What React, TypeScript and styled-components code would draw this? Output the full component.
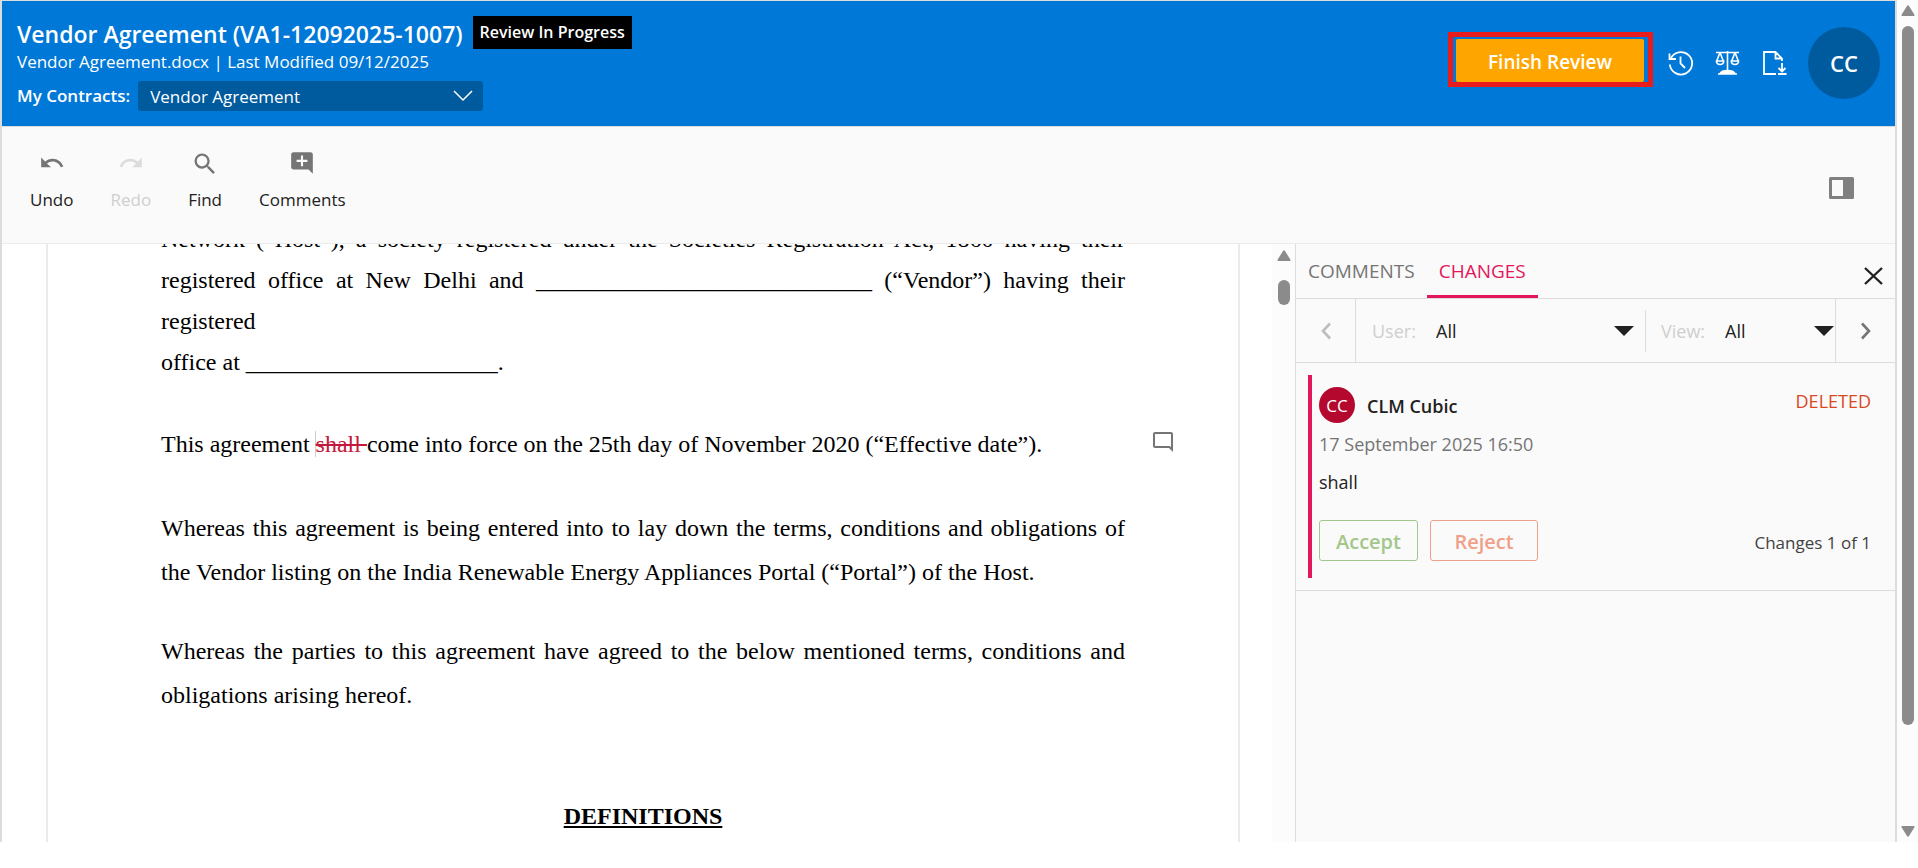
import React from "react";
import styled, { createGlobalStyle } from "styled-components";
import { MdAddComment, MdOutlineModeComment, MdRedo, MdSearch, MdUndo } from "react-icons/md";

const ui = `"Segoe UI", "Open Sans", "Noto Sans", sans-serif`;
const pink = "#e3165b";
const line = "#dcdcdc";

const GlobalStyle = createGlobalStyle`
  * { box-sizing: border-box; }
  body { margin: 0; background: #fff; font-family: ${ui}; color: #212121; }
  button, select { font-family: inherit; }
  h1, h2, p { margin: 0; }
`;

const Window = styled.div`
  display: flex;
  height: calc(100vh - 26px);
`;

const Shell = styled.div`
  flex: 1;
  min-width: 0;
  display: flex;
  flex-direction: column;
  border: 2px solid ${line};
  border-top-width: 1px;
  border-bottom: 0;
`;

const Header = styled.header`
  display: flex;
  justify-content: space-between;
  height: 125px;
  padding: 15px 15px 0;
  background: #0078d7;
  color: #fff;
`;

const TitleRow = styled.div`
  display: flex;
  align-items: flex-start;
  gap: 10px;
`;

const Title = styled.h1`
  font-size: 23px;
  line-height: 37px;
  font-weight: 600;
  white-space: nowrap;
`;

const Badge = styled.span`
  padding: 0 7px;
  background: #000;
  font-size: 16px;
  line-height: 33px;
  font-weight: 600;
  white-space: nowrap;
`;

const Subtitle = styled.p`
  font-size: 17px;
  line-height: 18px;
`;

const ContractRow = styled.div`
  display: flex;
  align-items: center;
  gap: 8px;
  margin-top: 10px;
`;

const ContractLabel = styled.label`
  font-size: 17px;
  line-height: 30px;
  font-weight: 600;
`;

const SelectBox = styled.div`
  display: grid;
  align-items: center;
  > * { grid-area: 1 / 1; }
  > svg { justify-self: end; pointer-events: none; }
`;

const ContractSelectBox = styled(SelectBox)`
  width: 345px;
  > svg { margin-right: 10px; }
`;

const ContractSelect = styled.select`
  appearance: none;
  height: 30px;
  padding: 0 12px;
  border: 0;
  border-radius: 3px;
  background: #005a9e;
  color: #fff;
  font-size: 17px;
`;

const HeaderActions = styled.div`
  display: flex;
  align-items: center;
  height: 72px;
  margin-top: 11px;
`;

const Highlight = styled.div`
  height: 55px;
  padding: 2px 4px 0 3px;
  margin: 0 14px 8px 0;
  border: 5px solid #e81c1c;
`;

const FinishButton = styled.button`
  width: 188px;
  height: 43px;
  padding: 4px 0 0;
  border: 0;
  border-radius: 2px;
  background: #ffa500;
  color: #fff;
  font-size: 19px;
  font-weight: 600;
`;

const HeaderIcon = styled.button`
  display: grid;
  width: 28px;
  height: 28px;
  place-items: center;
  margin-right: 19px;
  padding: 0;
  border: 0;
  background: none;
  color: #fff;
`;

const Avatar = styled.span<{ $small?: boolean }>`
  display: grid;
  place-items: center;
  flex: none;
  width: ${(p) => (p.$small ? 36 : 72)}px;
  height: ${(p) => (p.$small ? 36 : 72)}px;
  border-radius: 50%;
  background: ${(p) => (p.$small ? "#b5082e" : "#005a9e")};
  color: #fff;
  font-size: ${(p) => (p.$small ? 17 : 22)}px;
  font-weight: ${(p) => (p.$small ? 400 : 600)};
`;

const Toolbar = styled.div`
  display: flex;
  justify-content: space-between;
  align-items: center;
  height: 118px;
  padding: 6px 41px 0 28px;
  border-top: 1px solid ${line};
  border-bottom: 1px solid #ebebeb;
  background: #fafafa;
`;

const Tools = styled.div`
  display: flex;
  gap: 37px;
  padding-bottom: 14px;
`;

const Tool = styled.button`
  display: flex;
  flex-direction: column;
  align-items: center;
  justify-content: space-between;
  height: 62px;
  padding: 0;
  border: 0;
  background: none;
  color: #212121;
  font-size: 17px;
  line-height: 24px;
  svg { color: #757575; }
  &:disabled { color: #cfcfcf; }
  &:disabled svg { color: #dcdcdc; }
`;

const PlainButton = styled.button`
  display: grid;
  place-items: center;
  padding: 0;
  border: 0;
  background: none;
  color: inherit;
`;

const Workspace = styled.main`
  display: flex;
  flex: 1;
  min-height: 0;
`;

const Editor = styled.div`
  flex: 1;
  min-width: 0;
  overflow: hidden;
  padding: 0 32px 0 44px;
`;

const Page = styled.article`
  display: grid;
  grid-template-columns: 113px minmax(0, 1fr) 113px;
  margin-top: -25px;
  padding-bottom: 60px;
  border: 2px solid #ebebeb;
  border-width: 0 2px;
  color: #000;
  font-family: "Times New Roman", "Liberation Serif", serif;
  font-size: 24px;
`;

const Paragraph = styled.p<{ $loose?: boolean }>`
  grid-column: 2;
  margin-bottom: ${(p) => (p.$loose ? 35 : 41)}px;
  line-height: ${(p) => (p.$loose ? 44 : 41)}px;
  text-align: justify;
`;

const Deleted = styled.del`
  border-left: 1px solid #ccc;
  margin-left: -1px;
  color: #c4183c;
  text-decoration-thickness: 2px;
`;

const CommentMark = styled(PlainButton)`
  grid-column: 3;
  justify-self: start;
  align-self: start;
  margin: 6px 0 0 26px;
  color: #757575;
`;

const SectionTitle = styled.h2`
  grid-column: 2;
  margin-top: 42px;
  font-size: 24px;
  line-height: 44px;
  text-align: center;
  text-decoration: underline;
`;

const Rail = styled.div<{ $page?: boolean }>`
  display: flex;
  flex-direction: column;
  align-items: center;
  flex: none;
  width: ${(p) => (p.$page ? 21 : 23)}px;
  padding: ${(p) => (p.$page ? "5px 0" : "6px 0 0")};
  background: #fcfcfc;
`;

const Thumb = styled.div<{ $page?: boolean }>`
  width: 12px;
  height: ${(p) => (p.$page ? "84%" : "25px")};
  margin: ${(p) => (p.$page ? "10px 0 auto" : "19px 0 0")};
  border-radius: 6px;
  background: #8b8b8b;
`;

const Panel = styled.aside`
  flex: none;
  width: 600px;
  border-left: 1px solid ${line};
  background: #fafafa;
`;

const Tabs = styled.div`
  display: flex;
  height: 55px;
  border-bottom: 1px solid ${line};
`;

const Tab = styled.button<{ $active?: boolean }>`
  height: 54px;
  padding: 2px 12px 0;
  border: 0;
  border-bottom: 3px solid ${(p) => (p.$active ? pink : "transparent")};
  background: none;
  color: ${(p) => (p.$active ? pink : "#757575")};
  font-size: 19px;
`;

const CloseButton = styled(PlainButton)`
  margin: 12px 12px 0 auto;
  height: 40px;
`;

const Filters = styled.div`
  display: flex;
  height: 64px;
  border-bottom: 1px solid ${line};
`;

const Step = styled(PlainButton)`
  width: 59px;
`;

const FilterGroup = styled.div`
  display: flex;
  flex: 1;
  align-items: center;
  border: 1px solid ${line};
  border-width: 0 1px;
`;

const FilterLabel = styled.label`
  color: #cfcfcf;
  font-size: 18px;
  line-height: 42px;
  padding-left: 16px;
  width: 80px;
`;

const FilterSelectBox = styled(SelectBox)<{ $grow?: boolean }>`
  flex: ${(p) => (p.$grow ? "1" : "0 0 110px")};
  > svg { margin-right: ${(p) => (p.$grow ? 11 : 1)}px; }
`;

const FilterSelect = styled.select`
  appearance: none;
  width: 100%;
  height: 42px;
  padding: 0;
  border: 0;
  background: none;
  color: #212121;
  font-size: 18px;
`;

const Divider = styled.span`
  width: 1px;
  height: 42px;
  margin-right: -1px;
  background: ${line};
`;

const CardWrap = styled.div`
  padding: 12px 24px 12px 12px;
  border-bottom: 1px solid ${line};
`;

const Card = styled.section`
  height: 203px;
  padding: 12px 0 0 7px;
  border-left: 4px solid ${pink};
`;

const CardHead = styled.div`
  display: flex;
  gap: 12px;
`;

const Author = styled.strong`
  font-size: 18px;
  line-height: 38px;
  font-weight: 600;
`;

const Status = styled.span`
  margin-left: auto;
  color: #d9481f;
  font-size: 18px;
  line-height: 28px;
`;

const Meta = styled.p<{ $body?: boolean }>`
  color: ${(p) => (p.$body ? "#212121" : "#757575")};
  font-size: 18px;
  line-height: 38px;
`;

const CardActions = styled.div`
  display: flex;
  align-items: center;
  gap: 12px;
  margin-top: 19px;
`;

const Decision = styled.button<{ $tone: string; $wide?: boolean }>`
  width: ${(p) => (p.$wide ? 108 : 99)}px;
  height: 41px;
  padding: 2px 0 0;
  border: 1px solid ${(p) => p.$tone};
  border-radius: 3px;
  background: none;
  color: ${(p) => p.$tone};
  font-size: 20px;
  font-weight: 600;
`;

const Count = styled.span`
  margin-left: auto;
  padding-top: 4px;
  color: #424242;
  font-size: 17px;
`;

const Caret = () => (
  <svg width="20" height="10" viewBox="0 0 20 10"><path d="M0 0h20L10 10z" fill="#212121" /></svg>
);

const Arrow = ({ down }: { down?: boolean }) => (
  <svg width="14" height="11" viewBox="0 0 14 11">
    <path
      d={down ? "M1.4 0h11.2q1.4 0 .7 1.6L8 10q-1 1.3-2 0L.7 1.6Q0 0 1.4 0z" : "M1.4 11h11.2q1.4 0 .7-1.6L8 1Q7-.3 6 1L.7 9.4Q0 11 1.4 11z"}
      fill="#8b8b8b"
    />
  </svg>
);

const Chevron = ({ right }: { right?: boolean }) => (
  <svg width="12" height="18" viewBox="0 0 12 18" fill="none" stroke={right ? "#757575" : "#bdbdbd"} strokeWidth="2.6">
    <path d={right ? "M2 1.500 9 9l-7 7.500" : "M10 1.500 3 9l7 7.500"} />
  </svg>
);

const HistoryIcon = () => (
  <svg width="26" height="26" viewBox="0 0 26 26" fill="none" stroke="#fff" strokeWidth="1.8">
    <path d="M1.500 3.500v5.500h6.500M2.600 9A11.200 11.200 0 1 1 1.800 14.500M12.500 6.500v7l4.500 4.500" />
  </svg>
);

const ScaleIcon = () => (
  <svg width="26" height="26" viewBox="0 0 26 26" fill="none" stroke="#fff" strokeWidth="1.6">
    <path d="M1 2.500h23M12.500 1v20M5 2.500 1.700 11M5 2.500 8.300 11M20 2.500 16.700 11M20 2.500l3.300 8.500M1.500 11h7.200c.6 4.600-7.800 4.600-7.200 0zM16.300 11h7.200c.6 4.600-7.800 4.600-7.200 0z" />
    <path d="M3 24h19M5 23.500c2-4 13-4 15 0z" fill="#fff" />
  </svg>
);

const DocumentIcon = () => (
  <svg width="26" height="26" viewBox="0 0 26 26" fill="none" stroke="#fff" strokeWidth="1.8">
    <path d="M14 24H2V2h11.500L20 8.500V11M13.500 2v6.500H20M20 13v8M16.500 18l3.500 3.500 3.500-3.500M16 24h8.500" />
  </svg>
);

export default function App() {
  return (
    <>
      <GlobalStyle />
      <Window>
        <Shell>
          <Header>
            <div>
              <TitleRow>
                <Title>Vendor Agreement (VA1-12092025-1007)</Title>
                <Badge>Review In Progress</Badge>
              </TitleRow>
              <Subtitle>Vendor Agreement.docx | Last Modified 09/12/2025</Subtitle>
              <ContractRow>
                <ContractLabel htmlFor="contract">My Contracts:</ContractLabel>
                <ContractSelectBox>
                  <ContractSelect id="contract"><option>Vendor Agreement</option></ContractSelect>
                  <svg width="20" height="12" viewBox="0 0 20 12" fill="none" stroke="#fff" strokeWidth="1.5">
                    <path d="m1 1 9 9 9-9" />
                  </svg>
                </ContractSelectBox>
              </ContractRow>
            </div>
            <HeaderActions>
              <Highlight><FinishButton>Finish Review</FinishButton></Highlight>
              <HeaderIcon aria-label="History"><HistoryIcon /></HeaderIcon>
              <HeaderIcon aria-label="Compare"><ScaleIcon /></HeaderIcon>
              <HeaderIcon aria-label="Download"><DocumentIcon /></HeaderIcon>
              <Avatar>CC</Avatar>
            </HeaderActions>
          </Header>

          <Toolbar>
            <Tools>
              <Tool><MdUndo size={26} />Undo</Tool>
              <Tool disabled><MdRedo size={26} />Redo</Tool>
              <Tool><MdSearch size={28} />Find</Tool>
              <Tool><MdAddComment size={26} />Comments</Tool>
            </Tools>
            <PlainButton aria-label="Toggle panel">
              <svg width="25" height="22" viewBox="0 0 25 22">
                <path fillRule="evenodd" d="M1.500 0h22Q25 0 25 1.500v19q0 1.500-1.500 1.500h-22Q0 22 0 20.500v-19Q0 0 1.500 0zM3 3v16h11V3z" fill="#808080" />
              </svg>
            </PlainButton>
          </Toolbar>

          <Workspace>
            <Editor>
              <Page>
                <Paragraph>
                  Network (“Host”), a society registered under the Societies Registration Act, 1860 having their
                  registered office at New Delhi and ____________________________ (“Vendor”) having their
                  registered
                  <br />
                  office at _____________________.
                </Paragraph>
                <Paragraph>
                  This agreement <Deleted>shall </Deleted>come into force on the 25th day of November 2020 (“Effective date”).
                </Paragraph>
                <CommentMark aria-label="Open comment"><MdOutlineModeComment size={24} /></CommentMark>
                <Paragraph $loose>
                  Whereas this agreement is being entered into to lay down the terms, conditions and obligations of
                  the Vendor listing on the India Renewable Energy Appliances Portal (“Portal”) of the Host.
                </Paragraph>
                <Paragraph $loose>
                  Whereas the parties to this agreement have agreed to the below mentioned terms, conditions and
                  obligations arising hereof.
                </Paragraph>
                <SectionTitle>DEFINITIONS</SectionTitle>
              </Page>
            </Editor>
            <Rail>
              <Arrow />
              <Thumb />
            </Rail>
            <Panel>
              <Tabs>
                <Tab>COMMENTS</Tab>
                <Tab $active>CHANGES</Tab>
                <CloseButton aria-label="Close">
                  <svg width="19" height="18" viewBox="0 0 19 18" stroke="#212121" strokeWidth="2.4">
                    <path d="m1 1 17 16M18 1 1 17" />
                  </svg>
                </CloseButton>
              </Tabs>
              <Filters>
                <Step aria-label="Previous" disabled><Chevron /></Step>
                <FilterGroup>
                  <FilterLabel htmlFor="user">User:</FilterLabel>
                  <FilterSelectBox $grow>
                    <FilterSelect id="user"><option>All</option></FilterSelect>
                    <Caret />
                  </FilterSelectBox>
                  <Divider />
                  <FilterLabel htmlFor="view">View:</FilterLabel>
                  <FilterSelectBox>
                    <FilterSelect id="view"><option>All</option></FilterSelect>
                    <Caret />
                  </FilterSelectBox>
                </FilterGroup>
                <Step aria-label="Next"><Chevron right /></Step>
              </Filters>
              <CardWrap>
                <Card>
                  <CardHead>
                    <Avatar $small>CC</Avatar>
                    <Author>CLM Cubic</Author>
                    <Status>DELETED</Status>
                  </CardHead>
                  <Meta>17 September 2025 16:50</Meta>
                  <Meta $body>shall</Meta>
                  <CardActions>
                    <Decision $tone="#a3c78a">Accept</Decision>
                    <Decision $tone="#f0a088" $wide>Reject</Decision>
                    <Count>Changes 1 of 1</Count>
                  </CardActions>
                </Card>
              </CardWrap>
            </Panel>
          </Workspace>
        </Shell>
        <Rail $page>
          <Arrow />
          <Thumb $page />
          <Arrow down />
        </Rail>
      </Window>
    </>
  );
}
